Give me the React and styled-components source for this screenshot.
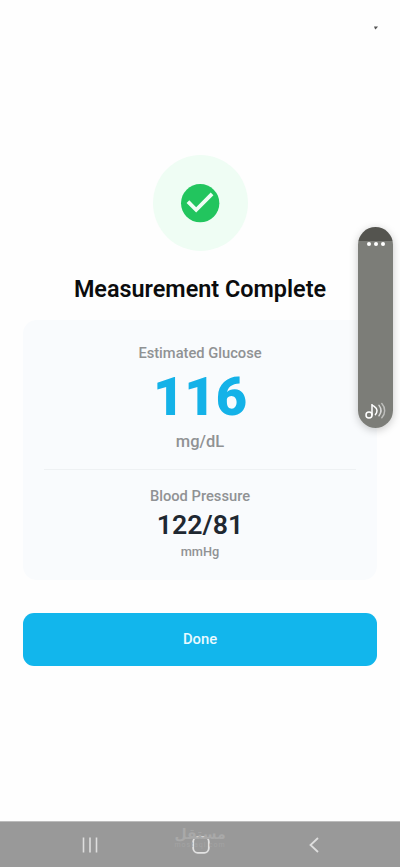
import React from 'react'
import styled, { createGlobalStyle } from 'styled-components'

const GlobalStyle = createGlobalStyle`
  * {
    box-sizing: border-box;
  }
  body {
    margin: 0;
    background-color: #fefefe;
    font-family: Roboto, 'Noto Sans', sans-serif;
  }
`

//Style
const Screen = styled.div`
  position: relative;
  display: flex;
  flex-direction: column;
  width: 100%;
  height: 100vh;
  min-height: 867px;
  overflow: hidden;
`

const StatusBar = styled.div`
  display: flex;
  justify-content: flex-end;
  height: 155px;
  padding: 26px 22px 0 0;
`

const Content = styled.main`
  flex: 1;
  display: flex;
  flex-direction: column;
  align-items: center;
  padding: 0 23px;
`

const SuccessCircle = styled.div`
  display: flex;
  justify-content: center;
  align-items: center;
  width: 95px;
  height: 96px;
  border-radius: 50%;
  background-color: #effdf4;
`

const Title = styled.h1`
  margin: 24px 0 16px;
  font-size: 23.4px;
  line-height: 29px;
  font-weight: 600;
  color: #0b0c0d;
  white-space: nowrap;
`

const ResultCard = styled.section`
  display: flex;
  flex-direction: column;
  align-items: center;
  width: 100%;
  height: 260px;
  padding: 22px 21px 0;
  border-radius: 14px;
  background-color: #f9fbfd;
`

const Label = styled.p`
  margin: 0;
  font-size: 14.7px;
  line-height: 22px;
  font-weight: 500;
  color: #909294;
`

const Value = styled.p`
  margin: 0;
  font-size: ${(props) => (props.$large ? '54px' : '26.7px')};
  line-height: ${(props) => (props.$large ? '66px' : '36px')};
  font-weight: ${(props) => (props.$large ? 900 : 600)};
  color: ${(props) => (props.$large ? '#14b2e8' : '#1f2831')};
`

const Unit = styled.p`
  margin: 0;
  font-size: ${(props) => (props.$large ? '16.5px' : '12.8px')};
  line-height: ${(props) => (props.$large ? '23px' : '18px')};
  font-weight: 500;
  color: #909294;
`

const Divider = styled.hr`
  flex-shrink: 0;
  width: 100%;
  height: 1px;
  margin: 16px 0 15px;
  border: none;
  background-color: #eef1f3;
`

const DoneBtn = styled.button`
  width: 100%;
  height: 53px;
  margin-top: 33px;
  padding: 0 0 1px;
  border: none;
  border-radius: 11px;
  background-color: #12b6ec;
  color: #e9faff;
  font-family: inherit;
  font-size: 14.8px;
  font-weight: 500;
  cursor: pointer;
`

const VolumePanel = styled.div`
  position: absolute;
  top: 227px;
  right: 7px;
  display: flex;
  flex-direction: column;
  justify-content: space-between;
  align-items: center;
  width: 35px;
  height: 201px;
  padding: 14px 0 7px;
  border-radius: 18px;
  background: linear-gradient(#54544f 14px, #7c7d78 14px);
  box-shadow: 0 2px 8px rgba(0, 0, 0, 0.22);
`

const Dots = styled.div`
  display: flex;
  gap: 3px;
  padding-top: 1px;
`

const Dot = styled.span`
  width: 4px;
  height: 4px;
  border-radius: 50%;
  background-color: #fff;
`

const NavBar = styled.nav`
  position: relative;
  display: grid;
  grid-template-columns: 1fr 45px 1fr;
  align-items: center;
  height: 46px;
  border-top: 1px solid #bcbcbc;
  background-color: #999;
`

const NavBtn = styled.button`
  display: flex;
  justify-content: ${(props) => props.$align || 'center'};
  padding: ${(props) => props.$padding || '0'};
  border: none;
  background: none;
  cursor: pointer;
`

const Watermark = styled.div`
  position: absolute;
  top: 4px;
  left: 170px;
  width: 60px;
  text-align: center;
  color: #a9a9a9;
`

const WatermarkName = styled.div`
  font-family: 'DejaVu Sans', sans-serif;
  font-size: 14px;
  line-height: 16px;
  font-weight: 700;
`

const WatermarkUrl = styled.div`
  font-size: 7px;
  line-height: 7px;
  letter-spacing: 0.9px;
  color: #a4a4a4;
`

function CheckIcon() {
  return (
    <svg width="46" height="46" viewBox="0 0 24 24">
      <circle cx="12.1" cy="12.1" r="10" fill="#22c55e" />
      <path
        d="M10 17l-5-5 1.41-1.41L10 14.17l7.59-7.59L19 8z"
        fill="#effdf4"
      />
    </svg>
  )
}

function SoundIcon() {
  return (
    <svg
      width="22"
      height="19"
      viewBox="0 0 22 19"
      fill="none"
      stroke="#fff"
      strokeWidth="1.5"
      strokeLinecap="round"
    >
      <circle cx="4" cy="13" r="3" />
      <path d="M7 13V2c.4 2.6 5 2.6 5 6.6 0 1.8-.5 3-1.6 4" />
      <path d="M14 3.4c2.4 3 2.4 7.2 0 10.4" opacity="0.7" />
      <path d="M16.8 1.6c3.8 4.2 3.8 10 0 14.2" opacity="0.5" />
    </svg>
  )
}

function Result({ label, value, unit, large }) {
  return (
    <>
      <Label>{label}</Label>
      <Value $large={large}>{value}</Value>
      <Unit $large={large}>{unit}</Unit>
    </>
  )
}

function App() {
  return (
    <Screen>
      <GlobalStyle />
      <StatusBar>
        <svg width="4" height="4" viewBox="0 0 5 4">
          <path d="M0 0h5L3 2.5 1.5 4z" fill="#555" />
        </svg>
      </StatusBar>
      <Content>
        <SuccessCircle>
          <CheckIcon />
        </SuccessCircle>
        <Title>Measurement Complete</Title>
        <ResultCard>
          <Result label="Estimated Glucose" value="116" unit="mg/dL" large />
          <Divider />
          <Result label="Blood Pressure" value="122/81" unit="mmHg" />
        </ResultCard>
        <DoneBtn>Done</DoneBtn>
      </Content>
      <VolumePanel>
        <Dots>
          <Dot />
          <Dot />
          <Dot />
        </Dots>
        <SoundIcon />
      </VolumePanel>
      <NavBar>
        <Watermark>
          <WatermarkName>مستقل</WatermarkName>
          <WatermarkUrl>mostaql.com</WatermarkUrl>
        </Watermark>
        <NavBtn $align="flex-start" $padding="0 0 0 82px" aria-label="Recents">
          <svg width="16" height="16" stroke="#dedede" strokeWidth="1.6">
            <path d="M1.5 0.5v15M8 0.5v15M14.5 0.5v15" />
          </svg>
        </NavBtn>
        <NavBtn $padding="0 0 0 2px" aria-label="Home">
          <svg width="18" height="18" fill="none" stroke="#e2e2e2">
            <rect x="1.2" y="1.2" width="15.6" height="15.6" rx="4.5" strokeWidth="1.8" />
          </svg>
        </NavBtn>
        <NavBtn $align="flex-end" $padding="0 81px 0 0" aria-label="Back">
          <svg width="10" height="16" fill="none" stroke="#dedede">
            <path d="M9 1L1.5 8 9 15" strokeWidth="1.8" />
          </svg>
        </NavBtn>
      </NavBar>
    </Screen>
  )
}

export default App
